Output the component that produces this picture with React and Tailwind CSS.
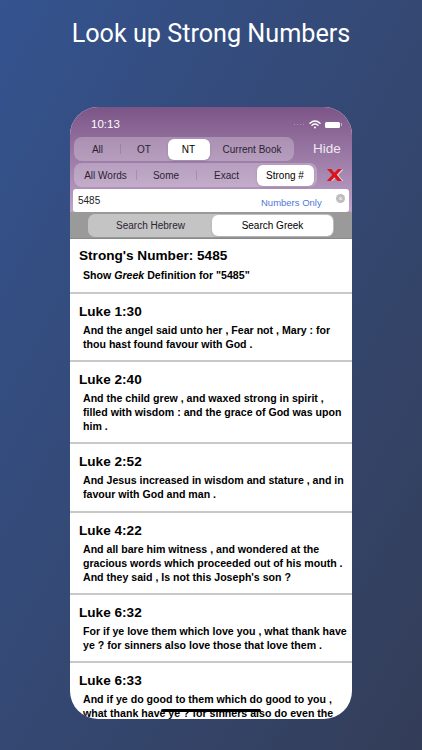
import React from "react";

const verses = [
  { ref: "Luke 1:30", h: "h-[68px]", lines: ["And the angel said unto her , Fear not , Mary : for", "thou hast found favour with God ."] },
  { ref: "Luke 2:40", h: "h-[82px]", lines: ["And the child grew , and waxed strong in spirit ,", "filled with wisdom : and the grace of God was upon", "him ."] },
  { ref: "Luke 2:52", h: "h-[69px]", lines: ["And Jesus increased in wisdom and stature , and in", "favour with God and man ."] },
  { ref: "Luke 4:22", h: "h-[82px]", lines: ["And all bare him witness , and wondered at the", "gracious words which proceeded out of his mouth .", "And they said , Is not this Joseph's son ?"] },
  { ref: "Luke 6:32", h: "h-[68px]", lines: ["For if ye love them which love you , what thank have", "ye ? for sinners also love those that love them ."] },
  { ref: "Luke 6:33", h: "h-[70px]", lines: ["And if ye do good to them which do good to you ,", "what thank have ye ? for sinners also do even the"] },
];

const Seg = ({ label, active, className }) => (
  <div
    className={`flex h-full items-center justify-center text-[10px] text-[#2b2433] ${
      active ? "rounded-[6px] bg-white text-black shadow-sm" : ""
    } ${className}`}
  >
    {label}
  </div>
);

const Divider = () => <div className="h-[10px] w-px shrink-0 bg-[#7c5587]/30" />;

const App = () => {
  return (
    <div className="flex h-[750px] w-[422px] flex-col items-center overflow-hidden bg-gradient-to-br from-[#34538f] to-[#333d58] font-['Liberation_Sans',sans-serif]">
      <h1 className="mt-[17px] h-[90px] font-['Roboto',sans-serif] text-[25.2px] leading-[34px] text-white">
        Look up Strong Numbers
      </h1>

      <div className="relative flex h-[612px] w-[282px] flex-col overflow-hidden rounded-[28px] bg-white">
        <div className="bg-gradient-to-b from-[#7c5587] to-[#bfa5c9]">
          {/* status bar */}
          <div className="flex h-[30px] items-center justify-between pl-[21px] pr-[10px] pt-[5px] text-white">
            <span className="text-[11.5px] font-medium">10:13</span>
            <div className="flex items-center gap-[4px]">
              <div className="mr-px flex gap-[1.5px]">
                <span className="h-[1.5px] w-[1.5px] rounded-full bg-white/40" />
                <span className="h-[1.5px] w-[1.5px] rounded-full bg-white/40" />
                <span className="h-[1.5px] w-[1.5px] rounded-full bg-white/40" />
                <span className="h-[1.5px] w-[1.5px] rounded-full bg-white/40" />
              </div>
              <svg width="12" height="9" viewBox="0 0 12 9" fill="none" stroke="white" strokeLinecap="round">
                <path d="M1 3.2C4 .6 8 .6 11 3.2" strokeWidth="1.5" />
                <path d="M3 5.2c1.8-1.5 4.2-1.5 6 0" strokeWidth="1.4" />
                <circle cx="6" cy="7.4" r="1" fill="white" stroke="none" />
              </svg>
              <div className="flex items-center gap-px">
                <div className="h-[6px] w-[15px] rounded-[1.5px] bg-white" />
                <div className="h-[3px] w-px bg-white/50" />
              </div>
            </div>
          </div>

          {/* scope row */}
          <div className="flex h-[24px] items-center pl-[4px]">
            <div className="flex h-[24px] w-[220px] items-center rounded-[8px] bg-white/25 p-[1.5px]">
              <Seg label="All" className="w-[44px]" />
              <Divider />
              <Seg label="OT" className="w-[47px]" />
              <Seg label="NT" active className="w-[42px]" />
              <Seg label="Current Book" className="ml-[2px] flex-1" />
            </div>
            <span className="ml-[19px] text-[13.5px] text-[#efe8f2]">Hide</span>
          </div>

          {/* match row */}
          <div className="mt-[2px] flex h-[24px] items-center pl-[4px]">
            <div className="flex h-[24px] w-[243px] items-center rounded-[8px] bg-white/25 p-[1.5px]">
              <Seg label="All Words" className="w-[60px]" />
              <Divider />
              <Seg label="Some" className="w-[59px]" />
              <Divider />
              <Seg label="Exact" className="w-[60px]" />
              <Seg label="Strong #" active className="w-[57px] text-[10.5px] font-medium" />
            </div>
            <svg className="ml-[9px]" width="18" height="14" viewBox="0 0 18 14">
              <path d="M2 1.500h4l3.500 3.500L13 1.500h4.500l-5.300 5.500L17.500 13h-4.500L10 9.500 6.500 13H2.300l5.500-6z" fill="#d8d0dc" />
              <path d="M1 1h4.500L8.500 4.500 12 1h4l-5.300 5.800L16 13h-4.500L8.500 9.300 5 13H.8l5.500-6.200z" fill="#d9141c" />
            </svg>
          </div>

          {/* search box */}
          <div className="relative mx-[3px] mt-[2px] flex h-[23px] items-center rounded-[3px] bg-white pb-[1px] pl-[5px] text-[10px] text-[#222]">
            5485
            <span className="absolute left-[188px] top-[8px] text-[9.5px] leading-[12px] text-[#4f79d8]">Numbers Only</span>
            <span className="absolute right-[4px] top-[5px] flex h-[9px] w-[9px] items-center justify-center rounded-full bg-[#bdbdbd] text-[7px] leading-none text-white">
              ×
            </span>
          </div>
        </div>

        {/* language band */}
        <div className="flex h-[27px] shrink-0 justify-center bg-[#9a9a9a] pt-[2px] shadow-[inset_0_-1px_0_#8a8a8a]">
          <div className="flex h-[23px] w-[246px] rounded-[7px] bg-[#c4c4c4] p-[1px]">
            <Seg label="Search Hebrew" className="w-[123px]" />
            <Seg label="Search Greek" active className="flex-1" />
          </div>
        </div>

        {/* results */}
        <div className="flex flex-col text-black">
          <div className="flex h-[55px] shrink-0 flex-col border-b-[2px] border-[#c9c9c9] pl-[9px] pt-[8px]">
            <div className="text-[13.6px] font-bold leading-[18px]">Strong's Number: 5485</div>
            <div className="mt-[3px] pl-[4px] text-[10.6px] font-bold leading-[14px]">
              Show <em>Greek</em> Definition for "5485"
            </div>
          </div>
          {verses.map((v) => (
            <div key={v.ref} className={`flex shrink-0 flex-col border-b-[2px] border-[#c9c9c9] pl-[9px] pt-[9px] ${v.h}`}>
              <div className="text-[13.6px] font-bold leading-[18px]">{v.ref}</div>
              <div className="mt-[1.500px] pl-[4px] text-[10.6px] font-bold leading-[14px]">
                {v.lines.map((line) => (
                  <div key={line} className="whitespace-nowrap">{line}</div>
                ))}
              </div>
            </div>
          ))}
        </div>

        {/* home indicator */}
        <div className="absolute bottom-[7px] left-[91px] h-[3px] w-[100px] rounded-full bg-black" />
      </div>
    </div>
  );
};

export default App;
